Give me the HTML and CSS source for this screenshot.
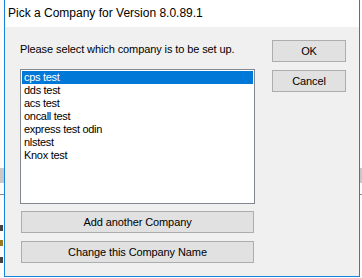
FILE: index.html
```html
<!DOCTYPE html>
<html lang="en">
<head>
  <meta charset="UTF-8">
  <title>Pick a Company</title>
  <link rel="stylesheet" href="styles.css">
</head>
<body>

  <div class="desk">
    <span class="desk-bar"></span>
    <span class="desk-line"></span>
    <span class="desk-mark m1"></span>
    <span class="desk-mark m2"></span>
    <span class="desk-mark m3"></span>
  </div>

  <div class="window">
    <div class="title">Pick a Company for Version 8.0.89.1</div>

    <div class="client">
      <div class="left">
        <p class="prompt">Please select which company is to be set up.</p>

        <ul class="list">
          <li class="selected">cps test</li>
          <li>dds test</li>
          <li>acs test</li>
          <li>oncall test</li>
          <li>express test odin</li>
          <li>nlstest</li>
          <li>Knox test</li>
        </ul>

        <button class="btn wide">Add another Company</button>
        <button class="btn wide">Change this Company Name</button>
      </div>

      <div class="right">
        <button class="btn">OK</button>
        <button class="btn">Cancel</button>
      </div>
    </div>
  </div>

</body>
</html>
```

FILE: styles.css
```css
* { box-sizing: border-box; margin: 0; padding: 0; }
body {
  background: #fcfcfc;
  font-family: "Liberation Sans", Arial, sans-serif;
  width: 362px;
  height: 278px;
  overflow: hidden;
  position: relative;
}

/* the app behind the dialog */
.desk-bar {
  position: absolute;
  left: 0;
  top: 168px;
  width: 362px;
  height: 15px;
  background: #c8c8c8;
}
.desk-line {
  position: absolute;
  left: 0;
  top: 194px;
  width: 362px;
  height: 1px;
  background: #8a8a8a;
}
.desk-mark {
  position: absolute;
  left: 0;
  width: 3px;
  height: 6px;
  background: #444;
}
.m1 { top: 225px; }
.m2 { top: 240px; background: #9a7a20; }
.m3 { top: 257px; }

.window {
  position: absolute;
  left: 4px;
  top: 0;
  width: 356px;
  height: 277px;
  background: #f0f0f0;
  border: 1px solid #1883d7;
  border-top: none;
}

.title {
  background: #fff;
  height: 27px;
  padding: 6px 0 0 3px;
  font-size: 12px;
  color: #000;
}

.client {
  display: flex;
  padding-left: 15px;
}

.left {
  width: 235px;
  display: flex;
  flex-direction: column;
}

.prompt {
  font-size: 11px;
  letter-spacing: -0.1px;
  color: #000;
  padding-top: 16px;
  height: 42px;
}

.list {
  list-style: none;
  background: #fff;
  border: 1px solid #828790;
  height: 135px;
  padding: 1px;
  margin-bottom: 7px;
}

.list li {
  height: 13px;
  line-height: 13px;
  font-size: 11px;
  letter-spacing: -0.3px;
  padding-left: 2px;
  color: #000;
}

.list li.selected {
  background: #0078d7;
  color: #fff;
}

.btn {
  font-family: "Liberation Sans", Arial, sans-serif;
  font-size: 11px;
  letter-spacing: -0.1px;
  color: #000;
  background: #e1e1e1;
  border: 1px solid #adadad;
  height: 22px;
  width: 74px;
  margin-bottom: 8px;
}

.btn.wide {
  width: 233px;
  margin-left: 1px;
}

.right {
  margin-left: 17px;
  padding-top: 13px;
  display: flex;
  flex-direction: column;
}
```
